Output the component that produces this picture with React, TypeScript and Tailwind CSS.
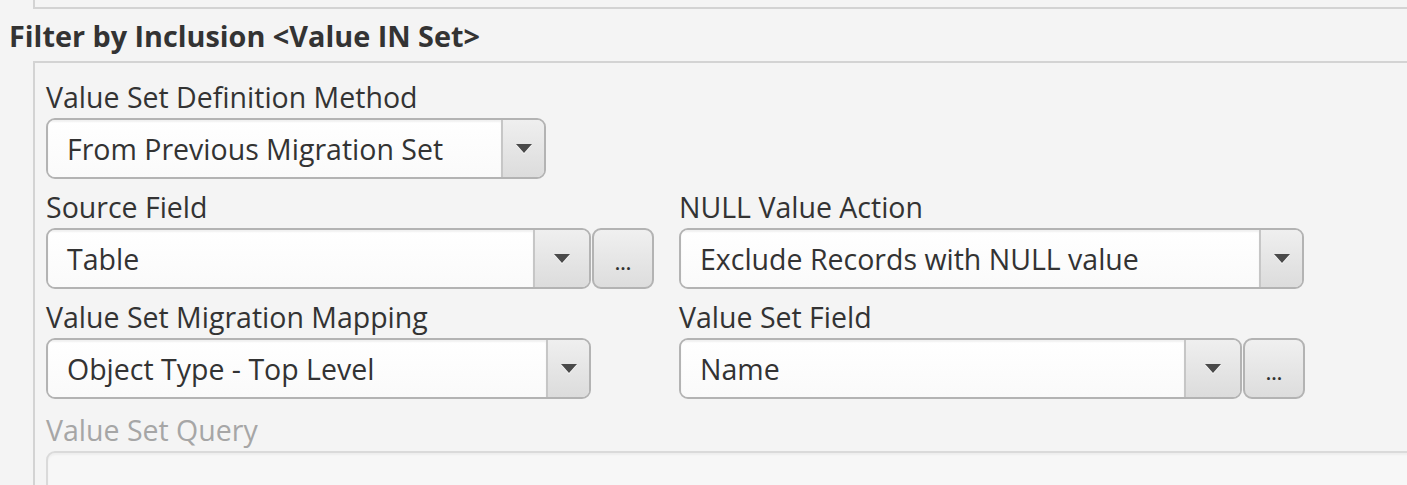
import React from "react";

const font = "font-['Open_Sans','Noto_Sans',sans-serif]";

function Arrow({ wide }: { wide?: boolean }) {
    return (
        <div className={"flex shrink-0 items-center justify-center border-l-2 border-[#c6c6c6] bg-linear-to-b from-[#efefef] to-[#dcdcdc] " + (wide ? "w-[56px]" : "w-[43px]")}>
            <svg width="16" height="10" viewBox="0 0 16 10">
                <polygon points="0,1 16,1 8,10" fill="#ffffff" />
                <polygon points="0,0 16,0 8,9" fill="#4a4a4a" />
            </svg>
        </div>
    );
}

function Combo({ value, className, wide }: { value: string; className: string; wide?: boolean }) {
    return (
        <div className={"flex h-[61px] overflow-hidden rounded-[9px] border-2 border-[#b3b3b3] " + className}>
            <div className="flex flex-1 items-center bg-linear-to-b from-white to-[#fafafa] pl-[19px] pt-[2px] text-[28.5px] text-[#333333] shadow-[inset_0_2px_2px_rgba(0,0,0,0.06)]">
                {value}
            </div>
            <Arrow wide={wide} />
        </div>
    );
}

function Dots() {
    return (
        <div className="flex h-[61px] w-[62px] shrink-0 items-center justify-center rounded-[9px] border-2 border-[#b3b3b3] bg-linear-to-b from-[#f0f0f0] to-[#dddddd] pt-[8px] text-[20px] font-semibold text-[#333333]">
            ...
        </div>
    );
}

function Label({ text, muted }: { text: string; muted?: boolean }) {
    return (
        <div className={"mb-[3px] h-[36px] text-[28.5px] leading-[36px] " + (muted ? "text-[#a6a6a6]" : "text-[#333333]")}>
            {text}
        </div>
    );
}

export default function App() {
    return (
        <div className={"h-[485px] w-[1407px] overflow-hidden bg-[#f4f4f4] " + font}>
            <div className="ml-[33px] h-[9px] w-[1400px] border-b-2 border-l-2 border-[#d3d3d3]" />
            <div className="ml-[9px] mt-[9px] h-[36px] text-[28.8px] font-bold leading-[36px] text-[#333333]">
                Filter by Inclusion &lt;Value IN Set&gt;
            </div>
            <div className="ml-[33px] mt-[7px] h-[500px] w-[1400px] border-l-2 border-t-2 border-[#d3d3d3] pl-[11px] pt-[16px]">
                <Label text="Value Set Definition Method" />
                <Combo value="From Previous Migration Set" className="w-[500px]" />

                <div className="mt-[10px] flex gap-[25px]">
                    <div className="flex flex-col">
                        <Label text="Source Field" />
                        <div className="flex gap-[1px]">
                            <Combo value="Table" className="w-[545px]" wide />
                            <Dots />
                        </div>
                    </div>
                    <div className="flex flex-col">
                        <Label text="NULL Value Action" />
                        <Combo value="Exclude Records with NULL value" className="w-[625px]" />
                    </div>
                </div>

                <div className="mt-[10px] flex gap-[25px]">
                    <div className="flex flex-col">
                        <Label text="Value Set Migration Mapping" />
                        <div className="flex gap-[1px]">
                            <Combo value="Object Type - Top Level" className="w-[545px]" />
                            <div className="w-[62px]" />
                        </div>
                    </div>
                    <div className="flex flex-col">
                        <Label text="Value Set Field" />
                        <div className="flex gap-[1px]">
                            <Combo value="Name" className="w-[563px]" wide />
                            <Dots />
                        </div>
                    </div>
                </div>

                <div className="mt-[13px]">
                    <Label text="Value Set Query" muted />
                    <div className="h-[100px] w-[1400px] rounded-[9px] border-2 border-[#dadada] bg-[#f7f7f7] shadow-[inset_0_2px_2px_rgba(0,0,0,0.04)]" />
                </div>
            </div>
        </div>
    );
}
